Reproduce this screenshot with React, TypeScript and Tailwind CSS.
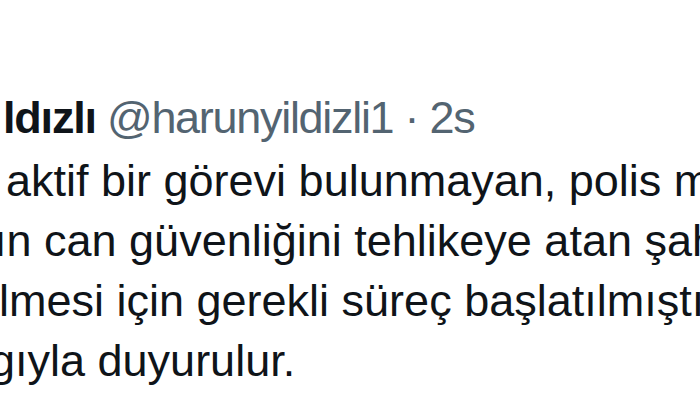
import React from "react";

export default function App() {
  return (
    <div
      className="w-[700px] h-[420px] bg-white overflow-hidden text-[45px] leading-[60px] text-[#0f1419] antialiased"
      style={{ fontFamily: '"Liberation Sans", Arial, sans-serif' }}
    >
      <div className="pt-[88px] whitespace-nowrap">
        <div className="ml-[3px]">
          <span className="font-bold text-[#0f1419] tracking-[-1.2px]">ldızlı</span>
          <span className="text-[#536471] tracking-[-1.3px]"> @harunyildizli1 · 2s</span>
        </div>
        <div className="mt-[3px] ml-[6px]">aktif bir görevi bulunmayan, polis mesleğine</div>
        <div className="-ml-[6px]">ın can güvenliğini tehlikeye atan şahsın</div>
        <div className="-ml-[1px]">lmesi için gerekli süreç başlatılmıştır.</div>
        <div className="-ml-[10px]">gıyla duyurulur.</div>
      </div>
    </div>
  );
}
